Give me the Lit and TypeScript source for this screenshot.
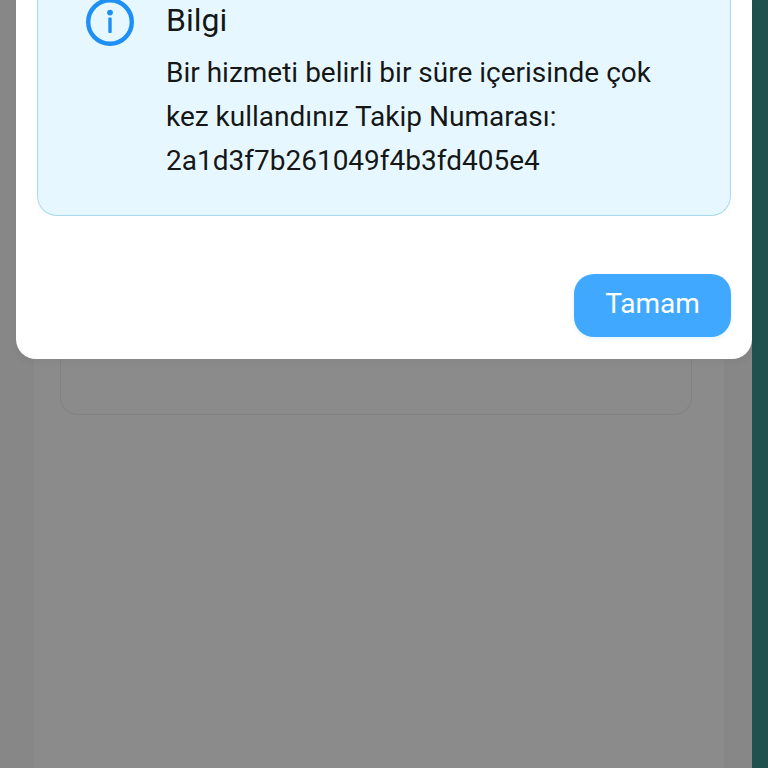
import { LitElement, html, css } from "lit";
import { customElement } from "lit/decorators.js";

@customElement("app-root")
export class AppRoot extends LitElement {
  static styles = css`
    :host {
      display: block;
      position: relative;
      width: 768px;
      height: 768px;
      overflow: hidden;
      font-family: Roboto, "Liberation Sans", sans-serif;
      background: #858585;
    }
    .page {
      display: flex;
      height: 768px;
    }
    .back {
      flex: 1;
      padding-left: 34px;
      padding-right: 28px;
      background: #878787;
    }
    .panel {
      height: 100%;
      box-sizing: border-box;
      padding: 0 32px 0 26px;
      background: #8b8b8b;
    }
    .card {
      height: 415px;
      box-sizing: border-box;
      border: 1px solid #828282;
      border-top: none;
      border-radius: 0 0 18px 18px;
    }
    .strip {
      width: 16px;
      background: #21514f;
    }
    .dialog {
      position: absolute;
      left: 16px;
      bottom: 409px;
      width: 736px;
      box-sizing: border-box;
      padding: 0 21px 22px 21px;
      background: #fff;
      border-radius: 0 0 20px 20px;
      box-shadow: 0 3px 8px rgba(0, 0, 0, 0.04);
    }
    .alert {
      display: flex;
      gap: 32px;
      box-sizing: border-box;
      padding: 0 32px 32px 48px;
      background: #e6f7ff;
      border: 1px solid #a8d9ee;
      border-top: none;
      border-radius: 0 0 20px 20px;
    }
    .icon {
      flex: none;
      width: 48px;
      height: 48px;
      display: block;
    }
    .text {
      flex: 1;
      color: rgba(0, 0, 0, 0.92);
    }
    .title {
      font-size: 32px;
      line-height: 44px;
      margin-bottom: 9px;
    }
    .desc {
      font-size: 28px;
      line-height: 44px;
    }
    .actions {
      display: flex;
      justify-content: flex-end;
      margin-top: 58px;
    }
    .ok {
      width: 157px;
      height: 63px;
      padding: 0 0 4px;
      border: none;
      border-radius: 20px;
      background: #40a9ff;
      color: #fff;
      font: inherit;
      font-size: 28px;
      box-shadow: 0 2px 4px rgba(5, 145, 255, 0.1);
    }
  `;

  render() {
    return html`
      <div class="page">
        <div class="back">
          <div class="panel"><div class="card"></div></div>
        </div>
        <div class="strip"></div>
      </div>
      <div class="dialog">
        <div class="alert">
          <svg class="icon" viewBox="0 0 48 48" fill="none">
            <circle cx="24" cy="24" r="21.8" stroke="#1e8ff5" stroke-width="4.4"></circle>
            <circle cx="24" cy="14.6" r="2.9" fill="#1e8ff5"></circle>
            <rect x="22.3" y="19.6" width="3.4" height="15.4" rx="0.8" fill="#1e8ff5"></rect>
          </svg>
          <div class="text">
            <div class="title">Bilgi</div>
            <div class="desc">
              Bir hizmeti belirli bir süre içerisinde çok<br />kez kullandınız Takip Numarası:<br />2a1d3f7b261049f4b3fd405e4
            </div>
          </div>
        </div>
        <div class="actions"><button class="ok">Tamam</button></div>
      </div>
    `;
  }
}
